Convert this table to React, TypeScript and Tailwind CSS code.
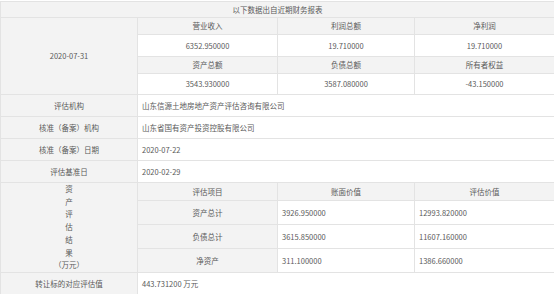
const label = "bg-[#f3f3f3] border border-[#e3e3e3] text-center align-middle";
const val = "bg-white border border-[#e3e3e3] text-left align-middle pl-[4px]";
const valC = "bg-white border border-[#e3e3e3] text-center align-middle";

const verticalTitle = ["资", "产", "评", "估", "结", "果", "（万元）"];

export default function App() {
  return (
    <div
      className="w-[554px] h-[294px] bg-white overflow-hidden text-[7.5px] text-[#5a5a5a]"
      style={{ fontFamily: '"Noto Sans CJK SC", "Noto Sans", sans-serif' }}
    >
      <div className="h-[1px] bg-white" />
      <table className="w-[554px] table-fixed border-collapse">
        <colgroup>
          <col className="w-[137px]" />
          <col className="w-[140px]" />
          <col className="w-[137px]" />
          <col className="w-[140px]" />
        </colgroup>
        <tbody>
          <tr className="h-[16px]">
            <td colSpan={4} className={label}>
              以下数据出自近期财务报表
            </td>
          </tr>
          <tr className="h-[17px]">
            <td rowSpan={4} className={label}>
              2020-07-31
            </td>
            <td className={label}>营业收入</td>
            <td className={label}>利润总额</td>
            <td className={label}>净利润</td>
          </tr>
          <tr className="h-[22px]">
            <td className={valC}>6352.950000</td>
            <td className={valC}>19.710000</td>
            <td className={valC}>19.710000</td>
          </tr>
          <tr className="h-[17px]">
            <td className={label}>资产总额</td>
            <td className={label}>负债总额</td>
            <td className={label}>所有者权益</td>
          </tr>
          <tr className="h-[21px]">
            <td className={valC}>3543.930000</td>
            <td className={valC}>3587.080000</td>
            <td className={valC}>-43.150000</td>
          </tr>
          <tr className="h-[22px]">
            <td className={label}>评估机构</td>
            <td colSpan={3} className={val}>
              山东信源土地房地产资产评估咨询有限公司
            </td>
          </tr>
          <tr className="h-[22px]">
            <td className={label}>核准（备案）机构</td>
            <td colSpan={3} className={val}>
              山东省国有资产投资控股有限公司
            </td>
          </tr>
          <tr className="h-[22px]">
            <td className={label}>核准（备案）日期</td>
            <td colSpan={3} className={val}>
              2020-07-22
            </td>
          </tr>
          <tr className="h-[22px]">
            <td className={label}>评估基准日</td>
            <td colSpan={3} className={val}>
              2020-02-29
            </td>
          </tr>
          <tr className="h-[18px]">
            <td rowSpan={4} className={label}>
              <div className="flex flex-col items-center">
                {verticalTitle.map((t) => (
                  <span key={t} className="leading-[12.7px]">
                    {t}
                  </span>
                ))}
              </div>
            </td>
            <td className={label}>评估项目</td>
            <td className={label}>账面价值</td>
            <td className={label}>评估价值</td>
          </tr>
          <tr className="h-[23px]">
            <td className={label}>资产总计</td>
            <td className={val}>3926.950000</td>
            <td className={val}>12993.820000</td>
          </tr>
          <tr className="h-[24px]">
            <td className={label}>负债总计</td>
            <td className={val}>3615.850000</td>
            <td className={val}>11607.160000</td>
          </tr>
          <tr className="h-[23px]">
            <td className={label}>净资产</td>
            <td className={val}>311.100000</td>
            <td className={val}>1386.660000</td>
          </tr>
          <tr className="h-[22px]">
            <td className={label}>转让标的对应评估值</td>
            <td colSpan={3} className={val}>
              443.731200 万元
            </td>
          </tr>
        </tbody>
      </table>
    </div>
  );
}
